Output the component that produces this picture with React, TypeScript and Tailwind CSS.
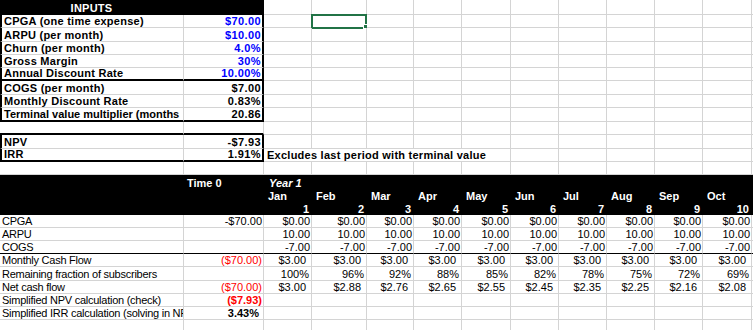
import { twMerge } from "tailwind-merge";
import type { ReactNode } from "react";

// column widths (A..L), each includes its 1px right gridline
const W = [
  "w-[184px]",
  "w-[80px]",
  "w-[48px]",
  "w-[55px]",
  "w-[47px]",
  "w-[48px]",
  "w-[49px]",
  "w-[48px]",
  "w-[48px]",
  "w-[48px]",
  "w-[48px]",
  "w-[49px]",
];

const Cell = ({
  col,
  className,
  children,
}: {
  col: number;
  className?: string;
  children?: ReactNode;
}) => (
  <div
    className={twMerge(
      "relative shrink-0 flex items-end whitespace-nowrap overflow-hidden border-r border-b border-r-[#d4d4d4] border-b-[#d4d4d4] px-[2px] leading-[12px]",
      W[col],
      className
    )}
  >
    {children}
  </div>
);

const Row = ({
  h,
  children,
  line,
}: {
  h: string;
  children: ReactNode;
  line?: string;
}) => (
  <div className={`flex ${h}`}>
    {children}
    <div className={twMerge("flex-1 border-b border-b-[#d4d4d4]", line)} />
  </div>
);

// empty cells from column `from` to L
const Blank = ({ from, to = 11, className }: { from: number; to?: number; className?: string }) => (
  <>
    {Array.from({ length: to - from + 1 }, (_, i) => (
      <Cell key={i} col={from + i} className={className} />
    ))}
  </>
);

const inputs: { label: string; value: string; blue?: boolean; h: string; split?: boolean; last?: boolean }[] = [
  { label: "CPGA (one time expense)", value: "$70.00", blue: true, h: "h-[13px]" },
  { label: "ARPU (per month)", value: "$10.00", blue: true, h: "h-[14px]" },
  { label: "Churn (per month)", value: "4.0%", blue: true, h: "h-[13px]" },
  { label: "Gross Margin", value: "30%", blue: true, h: "h-[13px]" },
  { label: "Annual Discount Rate", value: "10.00%", blue: true, h: "h-[13px]", split: true },
  { label: "COGS (per month)", value: "$7.00", h: "h-[14px]" },
  { label: "Monthly Discount Rate", value: "0.83%", h: "h-[13px]" },
  { label: "Terminal value multiplier (months", value: "20.86", h: "h-[14px]", last: true },
];

const months = ["Jan", "Feb", "Mar", "Apr", "May", "Jun", "Jul", "Aug", "Sep", "Oct"];
const fractions = ["100%", "96%", "92%", "88%", "85%", "82%", "78%", "75%", "72%", "69%"];
const netCash = ["$3.00", "$2.88", "$2.76", "$2.65", "$2.55", "$2.45", "$2.35", "$2.25", "$2.16", "$2.08"];

const App = () => {
  return (
    <div className="w-[753px] h-[330px] overflow-hidden bg-white text-black text-[11px] font-['Liberation_Sans',Arial,sans-serif]">
      {/* row 1 */}
      <Row h="h-[15px]">
        <Cell col={0} className="bg-black text-white font-bold tracking-[0.25px] justify-center border-r-black border-b-black">
          INPUTS
        </Cell>
        <Cell col={1} className="bg-black border-r-2 border-r-black border-b-black" />
        <Blank from={2} />
      </Row>

      {inputs.map((r, i) => (
        <Row key={r.label} h={r.h}>
          <Cell
            col={0}
            className={twMerge(
              "border-l-2 border-l-black font-bold tracking-[0.25px] pl-[2px]",
              (r.split || r.last) && "border-b-2 border-b-black",
              r.last && "tracking-[0px]"
            )}
          >
            {r.label}
          </Cell>
          <Cell
            col={1}
            className={twMerge(
              "border-r-2 border-r-black font-bold tracking-[0.4px] justify-end pr-[1px]",
              r.blue && "text-[#0000ff]",
              (r.split || r.last) && "border-b-2 border-b-black"
            )}
          >
            {r.value}
          </Cell>
          {i === 0 ? (
            <>
              <Cell col={2} />
              <Cell col={3} className="overflow-visible">
                <div className="absolute -left-px -top-px w-[56px] h-[15px] border-2 border-[#217346]" />
                <div className="absolute -right-[2px] -bottom-[2px] w-[5px] h-[5px] bg-[#217346] border border-white" />
              </Cell>
              <Blank from={4} />
            </>
          ) : (
            <Blank from={2} />
          )}
        </Row>
      ))}

      {/* row 10 */}
      <Row h="h-[13px]">
        <Cell col={0} className="border-b-2 border-b-black" />
        <Cell col={1} className="border-b-2 border-b-black" />
        <Blank from={2} />
      </Row>

      {/* NPV / IRR */}
      <Row h="h-[14px]">
        <Cell col={0} className="border-l-2 border-l-black font-bold tracking-[0.25px]">NPV</Cell>
        <Cell col={1} className="border-r-2 border-r-black font-bold tracking-[0.4px] justify-end pr-[1px]">-$7.93</Cell>
        <Blank from={2} />
      </Row>
      <Row h="h-[13px]">
        <Cell col={0} className="border-l-2 border-l-black border-b-2 border-b-black font-bold tracking-[0.25px]">IRR</Cell>
        <Cell col={1} className="border-r-2 border-r-black border-b-2 border-b-black font-bold tracking-[0.4px] justify-end pr-[1px]">
          1.91%
        </Cell>
        <div className="shrink-0 w-[247px] flex items-end leading-[12px] px-[3px] font-bold tracking-[0.25px] whitespace-nowrap border-r border-b border-[#d4d4d4]">
          Excludes last period with terminal value
        </div>
        <Blank from={7} />
      </Row>
      <Row h="h-[13px]">
        <Blank from={0} />
      </Row>

      {/* black header, rows 14-16 */}
      <div className="bg-black text-white font-bold">
        <div className="flex h-[14px]">
          <Cell col={0} className="border-0" />
          <Cell col={1} className="border-0 pl-[3px]">Time 0</Cell>
          <Cell col={2} className="border-0 pl-[5px] italic">Year 1</Cell>
        </div>
        <div className="flex h-[13px]">
          <Cell col={0} className="border-0" />
          <Cell col={1} className="border-0" />
          {months.map((m, i) => (
            <Cell key={m} col={i + 2} className="border-0 pl-[4px]">
              {m}
            </Cell>
          ))}
        </div>
        <div className="flex h-[13px]">
          <Cell col={0} className="border-0" />
          <Cell col={1} className="border-0" />
          {months.map((m, i) => (
            <Cell key={m} col={i + 2} className="border-0 justify-end pr-[3px]">
              {i + 1}
            </Cell>
          ))}
        </div>
      </div>

      {/* data rows */}
      <Row h="h-[13px]">
        <Cell col={0} className="tracking-[-0.25px]">CPGA</Cell>
        <Cell col={1} className="justify-end pr-px">-$70.00</Cell>
        {months.map((m, i) => (
          <Cell key={m} col={i + 2} className="justify-end pr-px">$0.00</Cell>
        ))}
      </Row>
      <Row h="h-[13px]">
        <Cell col={0} className="tracking-[-0.25px]">ARPU</Cell>
        <Cell col={1} />
        {months.map((m, i) => (
          <Cell key={m} col={i + 2} className="justify-end pr-px">10.00</Cell>
        ))}
      </Row>
      <Row h="h-[13px]" line="border-b-black">
        <Cell col={0} className="border-b-black tracking-[-0.25px]">COGS</Cell>
        <Cell col={1} className="border-b-black" />
        {months.map((m, i) => (
          <Cell key={m} col={i + 2} className="justify-end pr-px border-b-black">-7.00</Cell>
        ))}
      </Row>
      <Row h="h-[13px]">
        <Cell col={0} className="tracking-[-0.25px]">Monthly Cash Flow</Cell>
        <Cell col={1} className="justify-end pr-px text-[#ff0000]">($70.00)</Cell>
        {months.map((m, i) => (
          <Cell key={m} col={i + 2} className="justify-end pr-[5px]">$3.00</Cell>
        ))}
      </Row>
      <Row h="h-[14px]">
        <Cell col={0} className="tracking-[-0.25px]">Remaining fraction of subscribers</Cell>
        <Cell col={1} />
        {fractions.map((f, i) => (
          <Cell key={f} col={i + 2} className="justify-end pr-[2px]">{f}</Cell>
        ))}
      </Row>
      <Row h="h-[13px]">
        <Cell col={0} className="tracking-[-0.25px]">Net cash flow</Cell>
        <Cell col={1} className="justify-end pr-px text-[#ff0000]">($70.00)</Cell>
        {netCash.map((v, i) => (
          <Cell key={v} col={i + 2} className="justify-end pr-[5px]">{v}</Cell>
        ))}
      </Row>
      <Row h="h-[13px]">
        <Cell col={0} className="tracking-[-0.25px]">Simplified NPV calculation (check)</Cell>
        <Cell col={1} className="justify-end pr-px font-bold text-[#ff0000]">($7.93)</Cell>
        <Blank from={2} />
      </Row>
      <Row h="h-[13px]">
        <Cell col={0} className="tracking-[-0.25px]">Simplified IRR calculation (solving in NPV</Cell>
        <Cell col={1} className="justify-end pr-[4px] font-bold">3.43%</Cell>
        <Blank from={2} />
      </Row>
      <Row h="h-[13px]">
        <Blank from={0} />
      </Row>
    </div>
  );
};

export default App;
